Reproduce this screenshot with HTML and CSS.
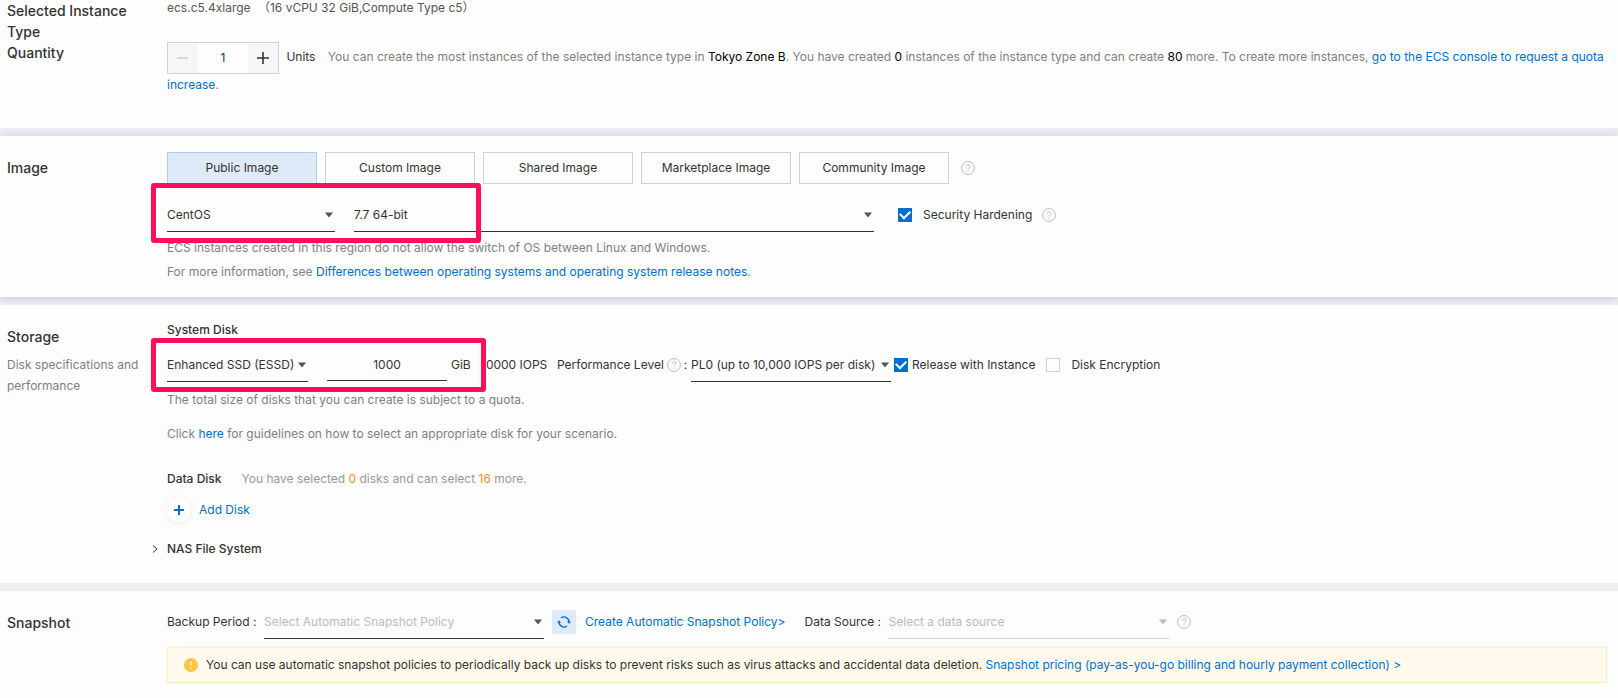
FILE: index.html
```html
<!DOCTYPE html>
<html lang="en">
<head>
    <meta charset="UTF-8">
    <meta name="viewport" content="width=device-width, initial-scale=1.0">
    <title>Create Instance</title>
    <link rel="stylesheet" href="styles.css">
</head>
<body>
    <svg class="sprite" aria-hidden="true">
        <symbol id="arrow" viewBox="0 0 10 6"><path d="M1 0.5h8L5 5.5z" fill="currentColor"/></symbol>
        <symbol id="help" viewBox="0 0 14 14">
            <circle cx="7" cy="7" r="6.4" fill="none" stroke="currentColor"/>
            <path d="M5.2 5.6c0-2.6 3.7-2.5 3.7-.3 0 1.3-1.9 1.5-1.9 3.1M7 9.6v1.1" fill="none" stroke="currentColor"/>
        </symbol>
    </svg>

    <main class="page">
        <section class="panel panel-instance">
            <h2 class="title">Selected Instance Type</h2>
            <div class="instance-type">ecs.c5.4xlarge <span class="spec">（16 vCPU 32 GiB,Compute Type c5）</span></div>
            <h2 class="title">Quantity</h2>
            <div class="quantity">
                <span class="stepper">
                    <button type="button" aria-label="Decrease" disabled>
                        <svg width="12" height="12" viewBox="0 0 12 12"><path d="M0 6h11" stroke="#ccc" stroke-width="1.4"/></svg>
                    </button>
                    <input type="text" value="1" aria-label="Quantity">
                    <button type="button" aria-label="Increase">
                        <svg width="12" height="12" viewBox="0 0 12 12"><path d="M0 6h12M6 0v12" stroke="#333" stroke-width="1.6"/></svg>
                    </button>
                </span>
                <span class="units">Units</span>
                <span class="muted">You can create the most instances of the selected instance type in <b>Tokyo Zone B</b>. You have created <b>0</b> instances of the instance type and can create <b>80</b> more. To create more instances, <a href="#">go to the ECS console to request a quota increase</a>.</span>
            </div>
        </section>

        <section class="panel panel-image">
            <h2 class="title">Image</h2>
            <div class="content">
                <div class="row">
                    <button type="button" class="tab active">Public Image</button>
                    <button type="button" class="tab">Custom Image</button>
                    <button type="button" class="tab">Shared Image</button>
                    <button type="button" class="tab">Marketplace Image</button>
                    <button type="button" class="tab">Community Image</button>
                    <svg class="help tab-help"><use href="#help"/></svg>
                </div>
                <div class="row image-row">
                    <span class="select select-os">
                        <select aria-label="Operating system"><option>CentOS</option></select>
                        <svg class="arrow"><use href="#arrow"/></svg>
                    </span>
                    <span class="select select-version">
                        <select aria-label="Version"><option>7.7 64-bit</option></select>
                        <svg class="arrow"><use href="#arrow"/></svg>
                    </span>
                    <label class="check check-hardening"><input type="checkbox" checked>Security Hardening</label>
                    <svg class="help"><use href="#help"/></svg>
                    <span class="mark mark-image"></span>
                </div>
                <p class="muted note">ECS instances created in this region do not allow the switch of OS between Linux and Windows.</p>
                <p class="muted">For more information, see <a href="#">Differences between operating systems and operating system release notes</a>.</p>
            </div>
        </section>

        <section class="panel panel-storage">
            <div>
                <h2 class="title">Storage</h2>
                <p class="subtitle">Disk specifications and performance</p>
            </div>
            <div class="content">
                <h3 class="heading">System Disk</h3>
                <div class="row disk-row">
                    <span class="select select-disk">
                        <select aria-label="Disk type"><option>Enhanced SSD (ESSD)</option></select>
                        <svg class="arrow"><use href="#arrow"/></svg>
                    </span>
                    <input class="size" type="text" value="1000" aria-label="Disk size">
                    <span class="unit">GiB</span>
                    <span class="iops">10000 IOPS</span>
                    <label class="level" for="level">Performance Level <svg class="help"><use href="#help"/></svg> :</label>
                    <span class="select select-level">
                        <select id="level"><option>PL0 (up to 10,000 IOPS per disk)</option></select>
                        <svg class="arrow"><use href="#arrow"/></svg>
                    </span>
                    <label class="check check-release"><input type="checkbox" checked>Release with Instance</label>
                    <label class="check check-encrypt"><input type="checkbox">Disk Encryption</label>
                    <span class="mark mark-disk"></span>
                </div>
                <p class="muted quota">The total size of disks that you can create is subject to a quota.</p>
                <p class="muted guide">Click <a href="#">here</a> for guidelines on how to select an appropriate disk for your scenario.</p>
                <div class="row data-disk">
                    <h3 class="heading">Data Disk</h3>
                    <p class="light">You have selected <em>0</em> disks and can select <em>16</em> more.</p>
                </div>
                <button type="button" class="add">
                    <span class="add-icon">
                        <svg width="12" height="12" viewBox="0 0 12 12"><path d="M1 6h10M6 1v10" stroke="#0070cc" stroke-width="2"/></svg>
                    </span>
                    Add Disk
                </button>
                <button type="button" class="nas">
                    <svg width="6" height="8" viewBox="0 0 6 8"><path d="M1 0.5L5 4 1 7.5" fill="none" stroke="#333"/></svg>
                    NAS File System
                </button>
            </div>
        </section>

        <section class="panel panel-snapshot">
            <h2 class="title">Snapshot</h2>
            <div class="content">
                <div class="row">
                    <label class="period" for="period">Backup Period :</label>
                    <span class="select select-policy">
                        <select id="period"><option>Select Automatic Snapshot Policy</option></select>
                        <svg class="arrow"><use href="#arrow"/></svg>
                    </span>
                    <button type="button" class="refresh" aria-label="Refresh">
                        <svg width="14" height="12" viewBox="0 0 14 12" fill="none" stroke="#0070cc" stroke-width="1.3">
                            <path d="M4 2A5 5 0 0 1 12 6.2M10 10A5 5 0 0 1 2 5.8"/>
                            <path d="M10 5.6h4L12 7.8zM0 6.4h4L2 4.2z" fill="#0070cc" stroke="none"/>
                        </svg>
                    </button>
                    <a href="#">Create Automatic Snapshot Policy&gt;</a>
                    <label class="source" for="source">Data Source :</label>
                    <span class="select select-policy off">
                        <select id="source" disabled><option>Select a data source</option></select>
                        <svg class="arrow"><use href="#arrow"/></svg>
                    </span>
                    <svg class="help"><use href="#help"/></svg>
                </div>
                <div class="alert">
                    <svg width="14" height="14" viewBox="0 0 14 14"><circle cx="7" cy="7" r="7" fill="#ffc440"/><path d="M7 3v5M7 9.6v1.4" stroke="#fff" stroke-width="1.2"/></svg>
                    <p>You can use automatic snapshot policies to periodically back up disks to prevent risks such as virus attacks and accidental data deletion. <a href="#">Snapshot pricing (pay-as-you-go billing and hourly payment collection) &gt;</a></p>
                </div>
            </div>
        </section>
    </main>
</body>
</html>
```
FILE: styles.css
```css
* {
    box-sizing: border-box;
}

body {
    margin: 0;
    background-color: #ecedf1;
    color: #333;
    font-family: Inter, "Noto Sans CJK SC", sans-serif;
    font-size: 12px;
    line-height: 22px;
}

h2, h3, p {
    margin: 0;
}

a {
    color: #0070cc;
    text-decoration: none;
}

button, input, select {
    font: inherit;
    color: inherit;
    padding: 0;
    border: 0;
    border-radius: 0;
    background: none;
}

.sprite {
    display: none;
}

.page {
    display: flex;
    flex-direction: column;
    gap: 8px;
    min-height: 100vh;
}

.panel {
    display: grid;
    grid-template-columns: 160px minmax(0, 1fr);
    padding: 0 11px 0 7px;
    background-color: #fdfdfd;
}

.title {
    font-size: 14px;
    font-weight: 500;
    line-height: 21px;
    padding-right: 20px;
}

.subtitle {
    margin-top: 7px;
    padding-right: 20px;
    line-height: 21px;
    color: #808080;
}

.row {
    display: flex;
    align-items: center;
    position: relative;
}

.heading {
    font-size: 12px;
    font-weight: 500;
}

.muted {
    color: #808080;
    line-height: 24px;
}

.light {
    color: #999;
}

.light em {
    color: #f98e1e;
    font-style: normal;
}

.help {
    flex: none;
    width: 14px;
    height: 14px;
    color: #bbb;
}

/* instance type and quantity */
.panel-instance {
    padding-bottom: 32px;
}

.instance-type {
    line-height: 15px;
    color: #555;
}

.spec {
    margin-left: 4px;
}

.quantity .muted {
    line-height: 22px;
}

.quantity b {
    color: #000;
    font-weight: 400;
}

.stepper {
    display: inline-flex;
    vertical-align: middle;
    width: 112px;
    height: 32px;
    border: 1px solid #d2d2d2;
}

.stepper button {
    display: grid;
    place-items: center;
    width: 30px;
    background-color: #f5f6f7;
}

.stepper input {
    flex: 1;
    min-width: 0;
    text-align: center;
}

.units {
    margin: 0 9px 0 4px;
}

/* image */
.panel-image {
    padding-top: 16px;
    padding-bottom: 13px;
    box-shadow: 0 1px 8px rgba(0, 0, 30, 0.16);
}

.panel-image .title {
    margin-top: 5px;
}

.tab {
    width: 150px;
    height: 32px;
    margin-right: 8px;
    border: 1px solid #d2d2d2;
}

.tab.active {
    background-color: #deeaf8;
    border-color: #a9cff0;
}

.tab-help {
    margin-left: 4px;
}

.image-row {
    margin-top: 14px;
}

.note {
    margin-top: 4px;
}

/* underlined drop-downs */
.select {
    display: grid;
    align-items: center;
    height: 34px;
    border-bottom: 1px solid #333;
}

.select select {
    grid-area: 1 / 1;
    appearance: none;
    width: 100%;
    outline: none;
}

.select .arrow {
    grid-area: 1 / 1;
    justify-self: end;
    width: 10px;
    height: 6px;
    margin-right: 1px;
    color: #555;
    pointer-events: none;
}

.select-os {
    width: 168px;
    margin-right: 19px;
}

.select-version {
    width: 520px;
}

.select-disk {
    width: 141px;
}

.select-level {
    width: 200px;
}

.select-policy {
    width: 280px;
    color: #bbb;
}

.select.off {
    border-color: #d2d2d2;
}

.select.off .arrow {
    color: #bbb;
}

.select select:disabled {
    opacity: 1;
}

/* check boxes */
.check {
    display: flex;
    align-items: center;
}

.check input {
    appearance: none;
    display: grid;
    place-items: center;
    width: 14px;
    height: 14px;
    margin: 0 11px 0 0;
    border: 1px solid #d2d2d2;
}

.check input:checked {
    background-color: #0070cc;
    border-color: #0070cc;
}

.check input:checked::before {
    content: "";
    width: 8px;
    height: 5px;
    margin-top: -3px;
    border: solid #fff;
    border-width: 0 0 2px 2px;
    transform: rotate(-45deg);
}

.check-hardening {
    margin-left: 24px;
    margin-right: 10px;
}

.check-release {
    margin-left: 3px;
}

.check-release input {
    margin-right: 4px;
}

.check-encrypt {
    margin-left: 11px;
}

/* frames drawn over the form */
.mark {
    position: absolute;
    border: 5px solid #ff0f5b;
    border-radius: 3px;
    pointer-events: none;
}

.mark-image {
    top: -15px;
    left: -16px;
    width: 330px;
    height: 60px;
}

.mark-disk {
    top: -10px;
    left: -16px;
    width: 335px;
    height: 54px;
}

/* storage */
.panel-storage {
    padding-top: 14px;
    padding-bottom: 23px;
}

.panel-storage .title {
    margin-top: 7px;
}

.disk-row {
    margin-top: 7px;
}

.size {
    width: 120px;
    height: 32px;
    margin-left: 19px;
    border-bottom: 1px solid #333;
    text-align: center;
}

.unit {
    width: 30px;
    margin-left: 4px;
}

.iops {
    width: 76px;
}

.level {
    display: flex;
    align-items: center;
    gap: 3px;
    width: 134px;
}

.quota {
    margin-top: 6px;
}

.guide {
    margin-top: 10px;
}

.data-disk {
    gap: 20px;
    margin-top: 22px;
}

.add, .nas {
    display: flex;
    align-items: center;
}

.add {
    gap: 8px;
    margin-top: 8px;
    color: #0070cc;
}

.add-icon {
    display: grid;
    place-items: center;
    width: 24px;
    height: 24px;
    border-radius: 50%;
    background-color: #fff;
    box-shadow: 0 1px 8px rgba(0, 0, 0, 0.08);
}

.nas {
    gap: 9px;
    margin-top: 16px;
    margin-left: -15px;
    font-weight: 500;
}

/* snapshot */
.panel-snapshot {
    flex: 1;
    align-content: start;
    padding-top: 14px;
}

.panel-snapshot .title {
    margin-top: 7px;
}

.period {
    width: 97px;
}

.refresh {
    display: grid;
    place-items: center;
    width: 24px;
    height: 24px;
    margin: 0 9px 0 8px;
    background-color: #deeaf8;
}

.source {
    width: 84px;
    margin-left: 19px;
}

.panel-snapshot .help {
    margin-left: 8px;
}

.alert {
    display: flex;
    align-items: center;
    gap: 8px;
    min-height: 36px;
    margin-top: 8px;
    padding: 0 16px;
    border: 1px solid #ffecc0;
    background-color: #fffaec;
}
```
